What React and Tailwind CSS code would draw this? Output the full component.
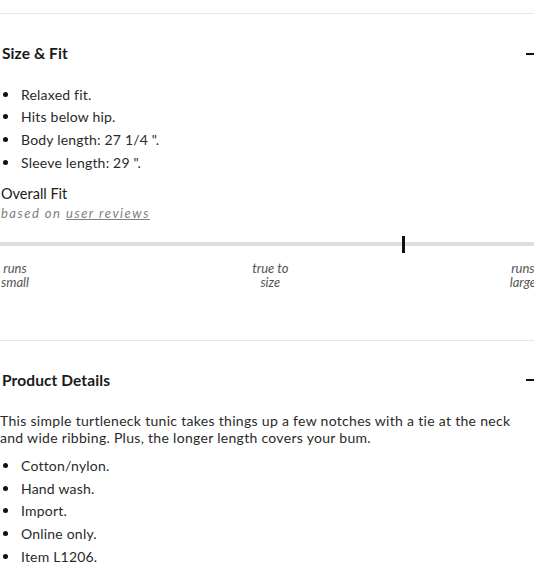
import React from "react";

function Bullets({ items }) {
  return (
    <ul className="flex flex-col">
      {items.map((t) => (
        <li key={t} className="flex items-center h-[22.6px]">
          <span className="ml-[3px] w-[5px] h-[5px] rounded-full bg-[#111] shrink-0" />
          <span className="ml-[13px] text-[14px] tracking-[0.2px] text-[#2a2a2a]">{t}</span>
        </li>
      ))}
    </ul>
  );
}

function Heading({ children }) {
  return (
    <div className="flex items-center h-[20px]">
      <h2 className="pl-[2px] text-[15.5px] font-bold text-[#1a1a1a] tracking-[0.1px]">{children}</h2>
      <span className="ml-auto mr-[-2px] w-[12px] h-[2px] bg-[#111]" />
    </div>
  );
}

export default function App() {
  return (
    <div className="w-[534px] h-[580px] overflow-hidden bg-white" style={{ fontFamily: "Lato, 'Noto Sans', sans-serif" }}>
      <div className="w-[536px]">
        <div className="h-[13px]" />
        <div className="border-t border-[#e6e6e6] pt-[30px]">
          <Heading>Size &amp; Fit</Heading>
          <div className="mt-[19px]">
            <Bullets items={["Relaxed fit.", "Hits below hip.", "Body length: 27 1/4 \".", "Sleeve length: 29 \"."]} />
          </div>
          <div className="mt-[11px] pl-[1px] text-[14.5px] leading-[20px] text-[#1a1a1a]">Overall Fit</div>
          <div className="text-[13px] leading-[18px] italic text-[#808080] tracking-[1.5px] pl-[1px]">
            based on <span className="underline">user reviews</span>
          </div>
          <div className="mt-[20px] relative h-[4px] bg-[#dedede]">
            <span className="absolute left-[402px] top-[-6px] w-[3px] h-[17px] bg-[#111]" />
          </div>
          <div className="mt-[15px] flex justify-between text-[13px] leading-[14px] italic text-[#555] text-center">
            <div className="pl-[1px]">runs<br />small</div>
            <div className="pl-[2px]">true to<br />size</div>
            <div>runs<br />large</div>
          </div>
        </div>
        <div className="mt-[51px] border-t border-[#e6e6e6] pt-[29px]">
          <Heading>Product Details</Heading>
          <p className="mt-[22px] text-[14px] leading-[17px] tracking-[0.3px] text-[#2a2a2a] pr-[20px]">
            This simple turtleneck tunic takes things up a few notches with a tie at the neck and wide ribbing. Plus, the longer length covers your bum.
          </p>
          <div className="mt-[8px]">
            <Bullets items={["Cotton/nylon.", "Hand wash.", "Import.", "Online only.", "Item L1206."]} />
          </div>
        </div>
      </div>
    </div>
  );
}
